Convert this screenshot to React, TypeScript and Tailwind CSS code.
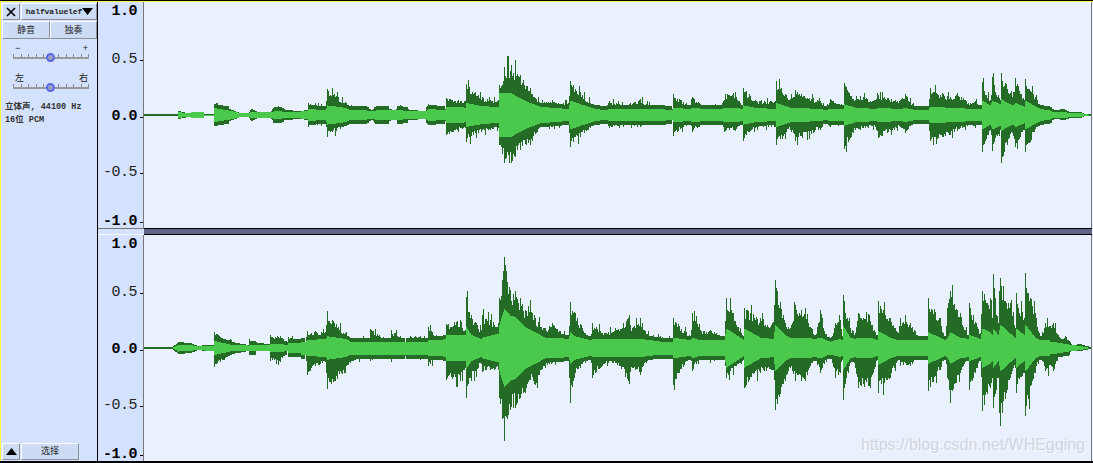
import { useMemo } from "react";

type Pt = [number, number, number, number]; // x, peak up, peak down, rms

const TOP: Pt[] = [
  [144, 1, 1, 0], [177, 1, 1, 0], [178, 4, 4, 3], [185, 2.5, 2.5, 2], [190, 2, 2, 2], [191, 3, 3, 3], [203, 3, 3, 3], [204, 1, 1, 0.5], [213, 1, 1, 0.5],
  [214, 11, 11, 7], [232, 5, 5, 4], [240, 2, 2, 2], [248, 2, 2, 2], [251, 6, 6, 3], [258, 3, 3, 2.5], [270, 3, 3, 3], [273, 7, 6, 3.5], [278, 9, 6, 4],
  [285, 5, 5, 3], [300, 4, 4, 3], [307, 5, 5, 3], [308, 12, 12, 5], [325, 8, 8, 4], [327, 26, 22, 8], [345, 13, 11, 6], [350, 8, 7, 4], [365, 7, 7, 4],
  [372, 5, 5, 3], [376, 8, 7, 4], [395, 5, 5, 4], [400, 10, 7, 4], [410, 5, 5, 3], [425, 4, 4, 3], [428, 11, 8, 5], [445, 6, 6, 4], [446, 17, 20, 7],
  [458, 15, 17, 7], [465, 14, 13, 6], [466, 31, 27, 10], [478, 20, 18, 8], [490, 15, 15, 7], [498, 15, 13, 7], [499, 30, 30, 18], [504, 48, 48, 18],
  [511, 50, 48, 18], [520, 40, 35, 14], [530, 27, 30, 10], [540, 12, 12, 7], [552, 15, 12, 6], [568, 12, 9, 5], [570, 34, 32, 12], [580, 23, 22, 9],
  [595, 9, 9, 5], [605, 7, 6, 4], [609, 14, 13, 5], [625, 10, 10, 5], [640, 16, 12, 5], [650, 10, 9, 5], [660, 9, 9, 5], [672, 6, 5, 4], [673, 21, 21, 6],
  [690, 9, 8, 5], [692, 18, 17, 6], [705, 8, 7, 5], [720, 10, 8, 5], [725, 21, 16, 6], [735, 23, 16, 6], [742, 8, 8, 5], [743, 27, 26, 8], [755, 15, 13, 6],
  [775, 14, 12, 5], [776, 34, 30, 10], [790, 16, 15, 6], [795, 25, 26, 6], [820, 14, 15, 5], [825, 8, 8, 4], [830, 16, 12, 5], [843, 10, 8, 5],
  [844, 32, 34, 9], [855, 15, 15, 6], [860, 19, 15, 6], [875, 15, 12, 5], [878, 20, 23, 6], [900, 15, 12, 5], [905, 21, 18, 6], [915, 7, 7, 4], [928, 7, 7, 4],
  [930, 27, 26, 7], [950, 18, 20, 6], [957, 22, 16, 6], [970, 12, 10, 5], [975, 14, 13, 5], [981, 8, 8, 5], [982, 33, 37, 12], [990, 15, 15, 8], [992, 38, 36, 12],
  [1000, 15, 15, 9], [1001, 42, 48, 13], [1012, 18, 18, 8], [1015, 37, 32, 10], [1024, 15, 15, 7], [1025, 36, 37, 12], [1040, 10, 8, 5], [1055, 5, 4, 3],
  [1064, 6, 5, 3], [1070, 3, 3, 2], [1080, 3, 3, 2], [1085, 1, 1, 1], [1091, 1, 1, 0],
];

const BOTTOM: Pt[] = [
  [144, 1, 1, 0], [172, 1, 1, 0], [178, 6, 6, 3.5], [190, 5, 5, 3], [198, 2, 2, 1.5], [205, 3, 3, 2.5], [213, 3, 3, 2.5], [214, 16, 19, 7], [232, 6, 6, 3],
  [248, 3, 3, 2.5], [249, 9, 5, 3], [258, 5, 3, 3], [269, 4, 3, 3], [270, 13, 13, 4], [280, 12, 14, 4], [287, 6, 3, 3], [288, 11, 6, 5], [305, 6, 5, 5],
  [307, 17, 27, 6], [325, 16, 14, 7], [327, 37, 41, 9], [345, 15, 25, 7], [350, 8, 15, 5], [365, 10, 10, 5], [369, 8, 8, 5], [370, 19, 13, 5], [385, 10, 8, 5],
  [390, 7, 5, 5], [391, 18, 14, 5], [400, 12, 10, 5], [405, 6, 8, 5], [410, 12, 10, 5], [420, 12, 12, 5], [427, 8, 5, 5], [428, 21, 18, 6], [440, 9, 8, 6],
  [445, 10, 8, 7], [446, 24, 32, 10], [460, 28, 33, 10], [465, 18, 20, 10], [466, 51, 50, 16], [471, 33, 33, 10], [481, 18, 16, 7], [482, 33, 24, 8],
  [498, 25, 22, 11], [499, 50, 50, 18], [504, 91, 93, 30], [510, 58, 62, 25], [515, 57, 60, 24], [520, 50, 50, 20], [525, 38, 45, 16], [530, 48, 32, 14],
  [535, 30, 37, 12], [545, 20, 20, 8], [552, 25, 15, 8], [568, 11, 10, 7], [570, 46, 55, 12], [575, 35, 25, 9], [585, 15, 15, 7], [590, 8, 8, 6], [592, 25, 30, 7],
  [605, 15, 15, 7], [615, 20, 15, 7], [628, 30, 33, 7], [632, 20, 20, 7], [640, 30, 27, 7], [650, 10, 8, 6], [660, 12, 10, 5], [672, 9, 8, 5], [673, 30, 37, 8],
  [690, 12, 8, 6], [692, 35, 23, 8], [700, 18, 10, 6], [710, 18, 15, 6], [724, 12, 8, 6], [726, 50, 30, 15], [740, 20, 15, 8], [743, 10, 10, 6], [744, 40, 40, 15],
  [760, 30, 25, 8], [773, 26, 22, 7], [775, 68, 62, 18], [785, 25, 33, 10], [790, 20, 20, 8], [795, 43, 33, 8], [805, 40, 33, 8], [815, 12, 12, 7], [820, 38, 25, 8],
  [826, 14, 14, 6], [830, 8, 6, 5], [835, 25, 30, 6], [840, 28, 25, 7], [842, 12, 12, 6], [843, 53, 52, 17], [850, 20, 15, 8], [855, 15, 20, 7], [858, 35, 40, 8],
  [870, 27, 40, 8], [877, 13, 12, 6], [878, 47, 45, 13], [890, 30, 30, 8], [898, 15, 12, 6], [900, 30, 18, 6], [910, 25, 18, 6], [920, 10, 9, 6], [927, 12, 8, 6],
  [928, 50, 43, 12], [940, 30, 22, 8], [945, 8, 8, 6], [947, 40, 30, 8], [950, 57, 55, 12], [960, 35, 25, 8], [968, 12, 12, 7], [969, 45, 42, 10], [980, 15, 12, 7],
  [982, 57, 63, 15], [990, 50, 40, 12], [992, 30, 30, 10], [993, 74, 60, 15], [998, 25, 30, 10], [1000, 70, 78, 18], [1010, 45, 30, 11], [1015, 20, 20, 8],
  [1016, 55, 45, 15], [1024, 30, 25, 10], [1025, 75, 68, 18], [1035, 35, 25, 8], [1040, 10, 10, 6], [1045, 25, 23, 6], [1053, 25, 23, 6], [1060, 10, 7, 5],
  [1065, 12, 6, 4], [1072, 3, 3, 3], [1080, 4, 3, 2], [1090, 1, 1, 0],
];

// small seeded generator so the jagged edge is the same on every render
function makeRand(seed: number) {
  let s = seed;
  return () => {
    s = (s * 1664525 + 1013904223) % 4294967296;
    return s / 4294967296;
  };
}

function buildPaths(points: Pt[], center: number, seed: number, gain: number) {
  const rand = makeRand(seed);
  let dark = "";
  let light = "";
  let i = 0;
  for (let x = 144; x < 1091; x++) {
    while (i < points.length - 2 && points[i + 1][0] <= x) i++;
    const a = points[i];
    const b = points[i + 1];
    const t = Math.min(1, (x - a[0]) / (b[0] - a[0]));
    const mix = (k: 1 | 2 | 3) => a[k] + (b[k] - a[k]) * t;
    const isKey = a[0] === x;
    const big = mix(1) > 6;
    const rms = mix(3) * (x > 300 && x < 1050 ? gain : 1);
    // peaks never sink into the light band once the track is loud
    const floor = big ? rms + 4 : 1;
    const jag = () => (isKey || !big ? 1 : rand() < 0.06 ? 1.2 : 0.74 + 0.26 * rand());
    const up = Math.max(mix(1) * jag(), floor);
    const down = Math.max(mix(2) * jag(), floor);
    const top = Math.round(center - up);
    const bottom = Math.round(center + down);
    dark += `M${x} ${top}V${bottom}H${x + 1}V${top}Z`;
    if (rms > 0) {
      const lt = Math.round(center - rms);
      const lb = Math.round(center + rms);
      light += `M${x} ${lt}V${lb}H${x + 1}V${lt}Z`;
    }
  }
  return { dark, light };
}

function Wave({ points, center, y, height, seed, gain }: { points: Pt[]; center: number; y: number; height: number; seed: number; gain: number }) {
  const { dark, light } = useMemo(() => buildPaths(points, center, seed, gain), [points, center, seed, gain]);
  return (
    <svg className="block w-[947px] shrink-0" height={height} viewBox={`144 ${y} 947 ${height}`} shapeRendering="crispEdges">
      <path d={dark} fill="#246c25" />
      <path d={light} fill="#4bc94c" />
    </svg>
  );
}

function RulerLabel({ text, tick, strong, className }: { text: string; tick?: boolean; strong?: boolean; className: string }) {
  return (
    <div className={`flex h-4 items-center justify-end ${className}`}>
      <span className={`font-['Liberation_Mono',monospace] text-[15px] leading-4 tracking-[-0.5px] whitespace-pre ${strong ? "font-bold text-black" : "text-[#222]"}`}>{text}</span>
      <span className={`ml-[3px] h-px w-[3px] ${tick ? "bg-black" : "bg-transparent"}`} />
    </div>
  );
}

function Ruler({ gaps }: { gaps: string[] }) {
  return (
    <div className="flex w-[46px] shrink-0 flex-col border-r border-[#777] bg-[#d4e2ff]">
      <RulerLabel text="1.0" strong className="mt-0.5" />
      <RulerLabel text="0.5" tick className={gaps[0]} />
      <RulerLabel text="0.0" tick strong className={gaps[1]} />
      <RulerLabel text="-0.5" tick className={gaps[2]} />
      <RulerLabel text="-1.0" tick strong className={gaps[3]} />
    </div>
  );
}

function PanelButton({ className, children }: { className: string; children: React.ReactNode }) {
  return (
    <div className={`flex items-center justify-center border border-t-white border-l-white border-r-[#8a8f99] border-b-[#8a8f99] bg-[#cddcf5] ${className}`}>
      {children}
    </div>
  );
}

function Slider({ left, right, className }: { left: string; right: string; className: string }) {
  return (
    <div className={`ml-[11px] w-[77px] ${className}`}>
      <div className="flex h-3 items-center justify-between px-0.5 text-[9px] leading-3 text-[#222]">
        <span>{left}</span>
        <span>{right}</span>
      </div>
      <div className="relative w-[76px]">
        <div className="flex h-[3px] justify-between">
          {Array.from({ length: 11 }, (_, i) => (
            <span key={i} className="h-[3px] w-px bg-[#8a8a8a]" />
          ))}
        </div>
        <div className="h-0.5 bg-[#9a9a9a]" />
        <div className="absolute top-[-1px] left-[33px] h-[9px] w-[9px] rounded-full border-2 border-[#5a67e6] bg-[#9aa0c0]" />
      </div>
    </div>
  );
}

export default function App() {
  return (
    <div className="flex h-[463px] w-[1093px] flex-col overflow-hidden bg-black font-['Liberation_Sans','Noto_Sans_CJK_SC',sans-serif]">
      <div className="mt-px h-px shrink-0 bg-[#fdfd3c]" />
      <div className="relative flex h-[459px] shrink-0">
        <div className="w-px shrink-0 bg-[#fdfd3c]" />
        {/* control panel */}
        <div className="flex w-[96px] shrink-0 flex-col bg-[#d4e2ff] pl-px">
          <div className="mt-px flex h-[17px] gap-px">
            <PanelButton className="w-[18px]">
              <svg width="10" height="10" viewBox="0 0 10 10" stroke="#000" strokeWidth="1.6">
                <path d="M1 1L9 9M9 1L1 9" />
              </svg>
            </PanelButton>
            <PanelButton className="w-[76px] justify-between pr-px pl-0.5">
              <span className="font-['Liberation_Mono',monospace] text-[8px] font-bold tracking-[-0.1px] text-[#222]">halfvaluelef</span>
              <svg width="11" height="7" viewBox="0 0 11 7" className="shrink-0">
                <path d="M0 0H11L5.5 7Z" fill="#000" />
              </svg>
            </PanelButton>
          </div>
          <div className="mt-px flex h-[18px]">
            <PanelButton className="w-[48px] pt-px text-[9px] text-[#222]">静音</PanelButton>
            <PanelButton className="w-[47px] pt-px text-[9px] text-[#222]">独奏</PanelButton>
          </div>
          <Slider left="−" right="+" className="mt-[3px]" />
          <Slider left="左" right="右" className="mt-[13px]" />
          <div className="mt-[12px] ml-[3px] text-[8.5px] leading-[13px] font-bold text-[#333]">
            <div className="font-['Liberation_Mono','Noto_Sans_CJK_SC',monospace] whitespace-pre">立体声, 44100 Hz</div>
            <div className="font-['Liberation_Mono','Noto_Sans_CJK_SC',monospace] whitespace-pre">16位 PCM</div>
          </div>
          <div className="mt-auto mb-px flex h-[17px] gap-px">
            <PanelButton className="w-[18px]">
              <svg width="11" height="7" viewBox="0 0 11 7">
                <path d="M0 7H11L5.5 0Z" fill="#000" />
              </svg>
            </PanelButton>
            <PanelButton className="w-[58px] text-[9px] text-[#222]">选择</PanelButton>
          </div>
        </div>
        <div className="w-px shrink-0 bg-black" />
        {/* tracks */}
        <div className="flex w-[994px] flex-col">
          <div className="flex h-[226px]">
            <Ruler gaps={["mt-8", "mt-[41px]", "mt-10", "mt-[33px]"]} />
            <div className="bg-[#e9f1ff]">
              <Wave points={TOP} center={115} y={2} height={226} seed={7} gain={1.2} />
            </div>
            <div className="w-px bg-[#777]" />
          </div>
          <div className="flex h-[7px]">
            <div className="h-full w-[46px] shrink-0 border-t border-b border-t-[#777] border-b-white bg-[#d4e2ff]" />
            <div className="h-full flex-1 border-t border-b border-black bg-[#5f6488]" />
          </div>
          <div className="flex h-[226px]">
            <Ruler gaps={["mt-8", "mt-[41px]", "mt-10", "mt-[33px]"]} />
            <div className="bg-[#e9f1ff]">
              <Wave points={BOTTOM} center={348} y={235} height={226} seed={23} gain={1.3} />
            </div>
            <div className="w-px bg-[#777]" />
          </div>
        </div>
        <div className="w-px shrink-0 bg-[#e9f1ff]" />
        {/* watermark */}
        <div className="absolute right-[8px] bottom-[6px] text-[16px] leading-5 text-[#cfd5df] [text-shadow:1px_1px_0_#f7f9fd]">
          https://blog.csdn.net/WHEgqing
        </div>
      </div>
    </div>
  );
}
